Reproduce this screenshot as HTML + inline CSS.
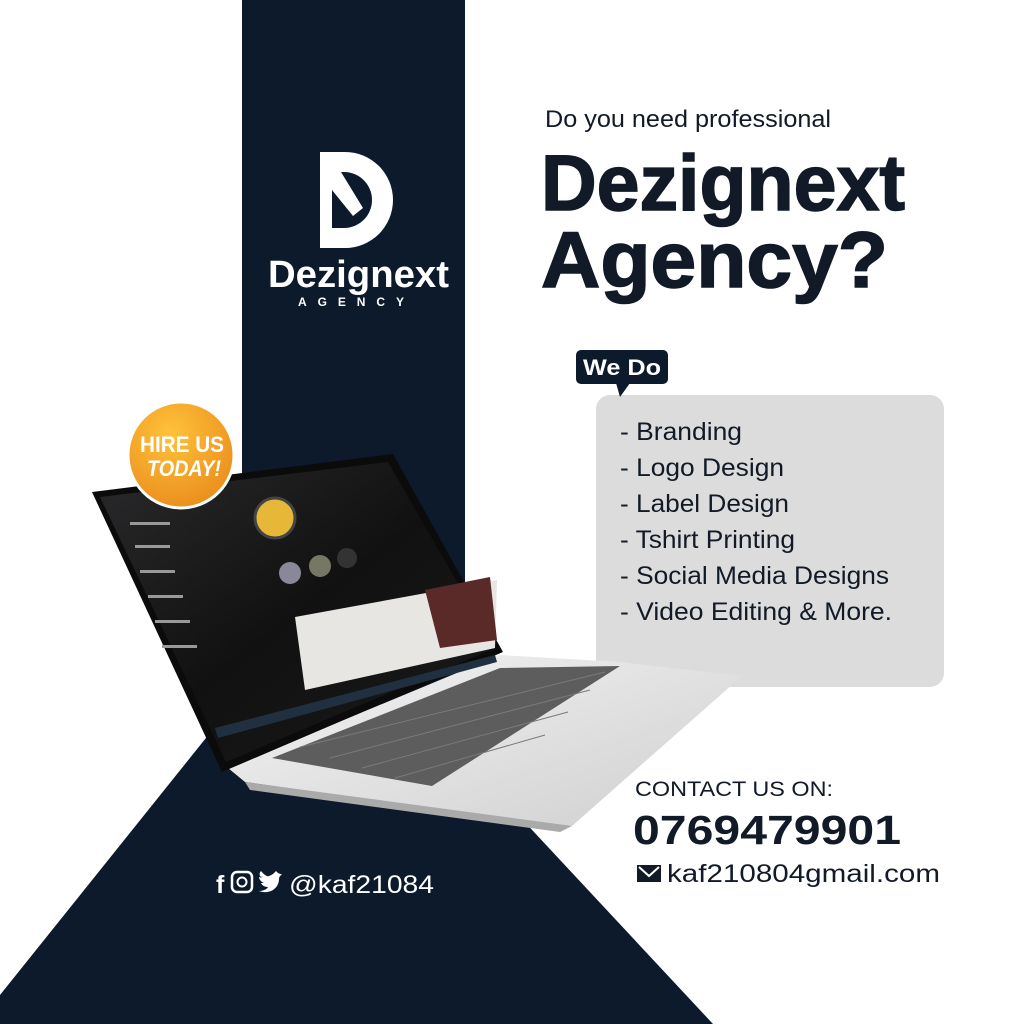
<!DOCTYPE html>
<html><head><meta charset="utf-8"><style>
html,body{margin:0;padding:0;background:#fff}
svg{display:block}
text{font-family:"Liberation Sans",sans-serif}
</style></head><body>
<svg width="1024" height="1024" viewBox="0 0 1024 1024" xmlns="http://www.w3.org/2000/svg">
<defs>
<radialGradient id="og" cx="0.4" cy="0.3" r="0.8"><stop offset="0" stop-color="#ffc23a"/><stop offset="1" stop-color="#e8891a"/></radialGradient>
<linearGradient id="scr" x1="0" y1="0" x2="1" y2="1"><stop offset="0" stop-color="#2a2a2c"/><stop offset="0.5" stop-color="#111"/><stop offset="1" stop-color="#1a1a1c"/></linearGradient>
<linearGradient id="base" x1="0" y1="0" x2="1" y2="1"><stop offset="0" stop-color="#f4f4f4"/><stop offset="1" stop-color="#cfcfcf"/></linearGradient>
</defs>
<rect width="1024" height="1024" fill="#fff"/>
<polygon points="242,0 465,0 465,758 713,1024 0,1024 0,995 242,693" fill="#0d1a2b"/>

<!-- logo -->
<path d="M320,152 L345,152 A48,48 0 0 1 345,248 L320,248 Z" fill="#fff"/>
<path d="M332,172 L344,172 A28,28 0 0 1 344,228 L332,228 Z" fill="#0d1a2b"/>
<polygon points="332,172 341,172 363,208 353,216 332,190" fill="#fff"/>
<text x="268" y="287" font-size="38" font-weight="bold" fill="#fff" textLength="181" lengthAdjust="spacingAndGlyphs">Dezignext</text>
<text x="298" y="306" font-size="12" font-weight="bold" fill="#fff" textLength="115" letter-spacing="9">AGENCY</text>

<!-- headline -->
<text x="545" y="127" font-size="24" fill="#111a26" textLength="286" lengthAdjust="spacingAndGlyphs">Do you need professional</text>
<text x="541" y="210" font-size="79" font-weight="bold" fill="#111a26" stroke="#111a26" stroke-width="1.5" textLength="364" lengthAdjust="spacingAndGlyphs">Dezignext</text>
<text x="541" y="287" font-size="79" font-weight="bold" fill="#111a26" stroke="#111a26" stroke-width="1.5" textLength="347" lengthAdjust="spacingAndGlyphs">Agency?</text>

<!-- gray box -->
<rect x="596" y="395" width="348" height="292" rx="14" fill="#dcdcdc"/>
<rect x="576" y="350" width="92" height="34" rx="5" fill="#0d1a2b"/>
<polygon points="616,383 630,383 620,397" fill="#0d1a2b"/>
<text x="583" y="375" font-size="22" font-weight="bold" fill="#fff" textLength="78" lengthAdjust="spacingAndGlyphs">We Do</text>
<g font-size="25" fill="#111a26">
<text x="620" y="440" textLength="122" lengthAdjust="spacingAndGlyphs">- Branding</text>
<text x="620" y="476" textLength="164" lengthAdjust="spacingAndGlyphs">- Logo Design</text>
<text x="620" y="512" textLength="169" lengthAdjust="spacingAndGlyphs">- Label Design</text>
<text x="620" y="548" textLength="175" lengthAdjust="spacingAndGlyphs">- Tshirt Printing</text>
<text x="620" y="584" textLength="269" lengthAdjust="spacingAndGlyphs">- Social Media Designs</text>
<text x="620" y="620" textLength="272" lengthAdjust="spacingAndGlyphs">- Video Editing &amp; More.</text>
</g>

<!-- laptop base -->
<polygon points="228,768 500,655 620,662 742,676 572,826 500,818 245,782" fill="url(#base)"/>
<polygon points="272,758 500,668 620,666 432,786" fill="#5d5d5d"/>
<g stroke="#7a7a7a" stroke-width="1" fill="none">
<line x1="300" y1="747" x2="605" y2="672"/><line x1="330" y1="758" x2="590" y2="690"/><line x1="362" y1="768" x2="568" y2="712"/><line x1="395" y1="778" x2="545" y2="735"/>
</g>
<polygon points="245,782 572,826 560,832 250,790" fill="#aaa"/>
<!-- screen -->
<polygon points="92,492 393,454 503,652 222,772" fill="#0b0b0c"/>
<polygon points="100,497 388,462 495,648 226,762" fill="url(#scr)"/>
<polygon points="295,617 497,580 495,648 305,690" fill="#e8e6e2"/>
<polygon points="425,590 490,577 497,640 440,648" fill="#5a2a28"/>
<circle cx="275" cy="518" r="20" fill="#e7b838" stroke="#444" stroke-width="3"/>
<circle cx="290" cy="573" r="11" fill="#889"/><circle cx="320" cy="566" r="11" fill="#776"/><circle cx="347" cy="558" r="10" fill="#333"/>
<polygon points="215,728 495,655 497,662 218,738" fill="#203040"/>
<g fill="#999"><rect x="130" y="522" width="40" height="3"/><rect x="135" y="545" width="35" height="3"/><rect x="140" y="570" width="35" height="3"/><rect x="148" y="595" width="35" height="3"/><rect x="155" y="620" width="35" height="3"/><rect x="162" y="645" width="35" height="3"/></g>

<!-- hire badge -->
<circle cx="181" cy="455" r="53" fill="url(#og)" stroke="#fff" stroke-width="3"/>
<text x="140" y="452" font-size="22" font-weight="bold" fill="#fff" textLength="84" lengthAdjust="spacingAndGlyphs">HIRE US</text>
<text x="147" y="476" font-size="22" font-weight="bold" font-style="italic" fill="#fff" textLength="74" lengthAdjust="spacingAndGlyphs">TODAY!</text>

<!-- contact -->
<text x="635" y="796" font-size="21" fill="#111a26" textLength="198" lengthAdjust="spacingAndGlyphs">CONTACT US ON:</text>
<text x="633" y="844" font-size="41" font-weight="bold" fill="#111a26" textLength="268" lengthAdjust="spacingAndGlyphs">0769479901</text>
<rect x="637" y="865" width="24" height="17" fill="#111a26"/>
<polyline points="639,867 649,876 659,867" fill="none" stroke="#fff" stroke-width="2"/>
<text x="667" y="882" font-size="25" fill="#111a26" textLength="273" lengthAdjust="spacingAndGlyphs">kaf210804gmail.com</text>

<!-- social -->
<text x="216" y="893" font-size="25" font-weight="bold" fill="#fff">f</text>
<rect x="232" y="872" width="20" height="20" rx="5" fill="none" stroke="#fff" stroke-width="2.5"/>
<circle cx="242" cy="882" r="4.5" fill="none" stroke="#fff" stroke-width="2"/>
<path d="M259,876 C266,878 272,876 276,871 C278,873 279,874 282,874 C280,876 279,877 279,879 C279,888 270,895 259,891 C264,891 267,889 268,887 C264,887 262,885 261,883 L264,883 C261,882 259,879 259,877 L262,878 C259,876 259,873 261,871 C264,875 268,877 272,878" fill="#fff"/>
<text x="289" y="893" font-size="25" fill="#fff" textLength="145" lengthAdjust="spacingAndGlyphs">@kaf21084</text>
</svg>
</body></html>
